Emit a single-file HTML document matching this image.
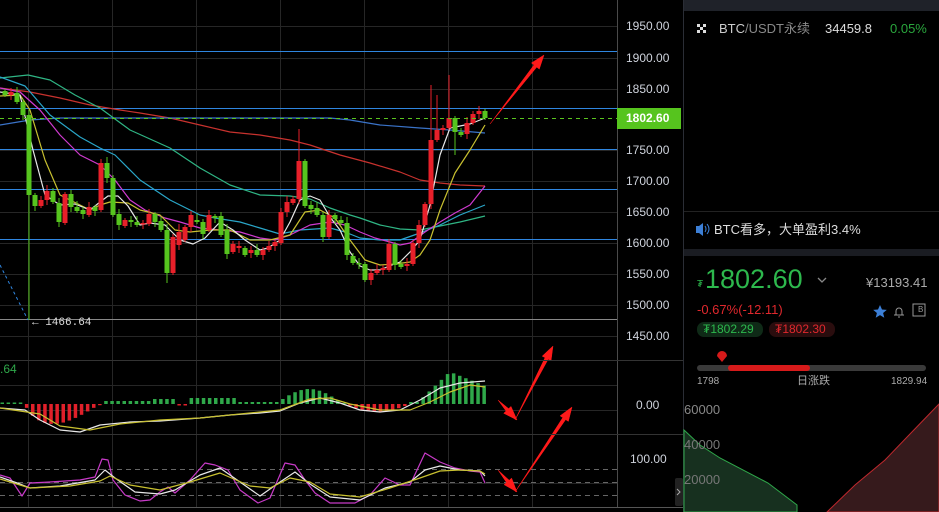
<!DOCTYPE html>
<html><head><meta charset="utf-8">
<style>
html,body{margin:0;padding:0;background:#000;width:939px;height:512px;overflow:hidden;font-family:"Liberation Sans","Noto Sans CJK SC",sans-serif}
#c{position:absolute;left:0;top:0}
.t{position:absolute;white-space:nowrap;line-height:1}
</style></head><body>
<svg id="c" width="939" height="512" xmlns="http://www.w3.org/2000/svg">
<g id="grid" stroke="#262626" stroke-width="1"></g>
<g id="hl" stroke="#2f86e0" stroke-width="1"></g>
<g id="ma" fill="none" stroke-width="1.2"></g>
<g id="cd"></g>
<g id="mac"></g>
<g id="ar" fill="#ff1a1a" stroke="#ff1a1a"></g>
<line x1="617.5" y1="0" x2="617.5" y2="507" stroke="#4a4a4a"/>
<line x1="0" y1="360.5" x2="683" y2="360.5" stroke="#333"/>
<line x1="0" y1="434.5" x2="683" y2="434.5" stroke="#333"/>
<line x1="0" y1="507.5" x2="683" y2="507.5" stroke="#555"/>
<line x1="0" y1="118.5" x2="617" y2="118.5" stroke="#5ac41e" stroke-dasharray="4,4"/>
<rect x="617" y="108" width="64" height="21" fill="#56c41e"/>
<path d="M0 265 L28 320" stroke="#2f86e0" stroke-dasharray="3,3"/>
<rect x="683" y="0" width="256" height="512" fill="#000"/>
<line x1="683.5" y1="0" x2="683.5" y2="512" stroke="#2a2d35"/>
<rect x="684" y="0" width="255" height="11" fill="#1f2229"/>
<line x1="684" y1="211.5" x2="939" y2="211.5" stroke="#222"/>
<rect x="684" y="249" width="255" height="7" fill="#1a1c22"/>
<g fill="#ddd"><rect x="697" y="24" width="3" height="3"/><rect x="703" y="24" width="3" height="3"/><rect x="700" y="27" width="3" height="3"/><rect x="697" y="30" width="3" height="3"/><rect x="703" y="30" width="3" height="3"/></g>
<path d="M696 226h3l4-3v13l-4-3h-3z" fill="#3c7fd6"/><path d="M705 226q2 3 0 6M707 224q4 5 0 10" stroke="#3c7fd6" fill="none"/>
<path d="M818 278l4 4 4-4" stroke="#888" fill="none" stroke-width="1.3"/>
<path d="M880 305l2 4.5 4.8.4-3.7 3.1 1.2 4.7-4.3-2.6-4.3 2.6 1.2-4.7-3.7-3.1 4.8-.4z" fill="#3c7fd6"/>
<path d="M894 315h10M896 315v-4a3 3 0 0 1 6 0v4M898 317h2" stroke="#999" fill="none"/>
<rect x="913" y="304" width="12" height="12" fill="none" stroke="#999"/>
<rect x="697" y="322" width="66" height="15" rx="7" fill="#0f2a17"/>
<rect x="769" y="322" width="66" height="15" rx="7" fill="#2a0d0e"/>
<path d="M722 362l-5-6a5 5 0 1 1 10 0z" fill="#d61a1a"/>
<rect x="697" y="365" width="229" height="6" rx="3" fill="#3a3a3a"/>
<rect x="728" y="365" width="82" height="6" rx="3" fill="#d61a1a"/>
<path d="M684 430L700 445 720 458 768 483 797 505V512H684z" fill="#17301f" stroke="#2fa84a"/>
<path d="M827 512L855 485 885 460 910 434 939 404V512z" fill="#361a1c" stroke="#c0282d"/>
<rect x="675" y="478" width="8" height="28" rx="2" fill="#222"/>
<path d="M677 489l3 3-3 3" stroke="#aaa" fill="none"/>
</svg>

<div class="t" style="left:626px;top:20px;color:#cfd3dc;font-size:12px">1950.00</div>
<div class="t" style="left:626px;top:52px;color:#cfd3dc;font-size:12px">1900.00</div>
<div class="t" style="left:626px;top:83px;color:#cfd3dc;font-size:12px">1850.00</div>
<div class="t" style="left:626px;top:112px;color:#fff;font-size:12px;font-weight:bold">1802.60</div>
<div class="t" style="left:626px;top:144px;color:#cfd3dc;font-size:12px">1750.00</div>
<div class="t" style="left:626px;top:175px;color:#cfd3dc;font-size:12px">1700.00</div>
<div class="t" style="left:626px;top:206px;color:#cfd3dc;font-size:12px">1650.00</div>
<div class="t" style="left:626px;top:237px;color:#cfd3dc;font-size:12px">1600.00</div>
<div class="t" style="left:626px;top:268px;color:#cfd3dc;font-size:12px">1550.00</div>
<div class="t" style="left:626px;top:299px;color:#cfd3dc;font-size:12px">1500.00</div>
<div class="t" style="left:626px;top:330px;color:#cfd3dc;font-size:12px">1450.00</div>
<div class="t" style="left:636px;top:399px;color:#cfd3dc;font-size:12px">0.00</div>
<div class="t" style="left:630px;top:453px;color:#cfd3dc;font-size:12px">100.00</div>
<div class="t" style="left:0px;top:363px;color:#2fa84a;font-size:12px">.64</div>
<div class="t" style="left:32px;top:318px;color:#ddd;font-size:11px;font-family:'Liberation Mono',monospace">← 1466.64</div>

<div class="t" style="left:719px;top:22px;font-size:13px;color:#ccc">BTC<span style="color:#888">/USDT永续</span></div>
<div class="t" style="left:825px;top:22px;font-size:13px;color:#ddd">34459.8</div>
<div class="t" style="left:890px;top:22px;font-size:13px;color:#2aa63d">0.05%</div>
<div class="t" style="left:714px;top:223px;font-size:13px;color:#ddd">BTC看多，大单盈利3.4%</div>
<div class="t" style="left:697px;top:280px;font-size:10px;color:#2db84d">₮</div>
<div class="t" style="left:705px;top:266px;font-size:27px;color:#2db84d">1802.60</div>
<div class="t" style="left:866px;top:276px;font-size:13px;color:#aaa">¥13193.41</div>
<div class="t" style="left:697px;top:303px;font-size:13px;color:#e0282d">-0.67%(-12.11)</div>
<div class="t" style="left:918px;top:306px;font-size:8px;color:#999">B</div>
<div class="t" style="left:703px;top:323px;font-size:12px;color:#2db84d">₮1802.29</div>
<div class="t" style="left:775px;top:323px;font-size:12px;color:#e0282d">₮1802.30</div>
<div class="t" style="left:697px;top:377px;font-size:10px;color:#aaa">1798</div>
<div class="t" style="left:797px;top:376px;font-size:11px;color:#aaa">日涨跌</div>
<div class="t" style="left:891px;top:377px;font-size:10px;color:#aaa">1829.94</div>
<div class="t" style="left:684px;top:403px;font-size:13px;color:#888">60000</div>
<div class="t" style="left:684px;top:438px;font-size:13px;color:#777">40000</div>
<div class="t" style="left:684px;top:473px;font-size:13px;color:#777">20000</div>

<script>
var NS="http://www.w3.org/2000/svg";
function el(p,t,a){var e=document.createElementNS(NS,t);for(var k in a)e.setAttribute(k,a[k]);document.getElementById(p).appendChild(e);return e;}
[28,112,196,280,364,448,532].forEach(function(x){el("grid","line",{x1:x+.5,y1:0,x2:x+.5,y2:507});});
[26,58,89,150,181,212,243,274,305,336,385,410,483].forEach(function(y){el("grid","line",{x1:0,y1:y+.5,x2:617,y2:y+.5});});
[51,108,149,189,239].forEach(function(y){el("hl","line",{x1:0,y1:y+.5,x2:617,y2:y+.5});});
el("grid","line",{x1:0,y1:319.5,x2:617,y2:319.5,stroke:"#888"});
[469,482,495].forEach(function(y){el("grid","line",{x1:0,y1:y+.5,x2:617,y2:y+.5,stroke:"#666","stroke-dasharray":"5,4"});});
var C=[[5,91,95],[11,95,92],[17,93,102],[23,102,115],[29,115,195],[35,195,206],[41,206,200],[47,200,191],[53,191,202],[59,203,222],[65,223,194],[71,194,207],[77,207,211],[83,210,214],[89,215,207],[95,207,211],[101,210,163],[107,163,178],[113,178,215],[119,214,225],[125,226,220],[131,220,222],[137,222,225],[143,224,223],[149,224,214],[155,214,222],[161,221,230],[167,230,273],[173,273,237],[179,245,232],[185,240,227],[191,227,215],[197,220,222],[203,222,234],[209,230,215],[215,216,218],[221,216,235],[227,230,254],[233,252,244],[239,248,246],[245,248,255],[251,253,250],[257,250,255],[263,255,250],[269,250,246],[275,246,242],[281,243,212],[287,212,202],[293,203,199],[299,199,161],[305,161,206],[311,205,209],[317,208,215],[323,215,237],[329,237,215],[335,215,219],[341,220,223],[347,223,255],[353,256,263],[359,263,264],[365,264,280],[371,280,273],[377,273,270],[383,270,268],[389,270,244],[395,244,265],[401,264,267],[407,266,264],[413,264,243],[419,243,225],[425,225,204],[431,204,140],[437,140,130],[443,130,128],[449,128,118],[455,118,132],[461,132,135],[467,134,123],[473,123,114],[479,114,111],[485,111,118]];
C.forEach(function(c,i){var x=c[0],o=c[1],cl=c[2];var dn=cl>=o;var col=dn?"#56c41e":"#e8202a";var top=Math.min(o,cl),bot=Math.max(o,cl);var w=((i*7)%5)+2;var hi=top-w,lo=bot+((i*3)%6)+2;
if(x==29)lo=320;if(x==299)hi=129;if(x==431)hi=85;if(x==449)hi=75;if(x==437)hi=95;if(x==455)lo=155;if(x==167)lo=283;if(x==179)hi=224;
el("cd","line",{x1:x,y1:hi,x2:x,y2:lo,stroke:col});el("cd","rect",{x:x-2.5,y:top,width:5,height:Math.max(bot-top,1.5),fill:col});});
function pl(p,pts,col,w){el(p,"polyline",{points:pts,stroke:col,fill:"none","stroke-width":w||1.2,"stroke-linejoin":"round"});}
pl("ma","0,88 30,92 60,98 90,105 120,110 140,113 170,118 200,125 230,132 260,135 290,140 310,145 340,155 370,163 400,172 420,180 440,183 460,185 485,186","#c8322e");
pl("ma","0,125 30,120 60,118 100,118 200,118 250,118 300,118 330,118 350,120 380,125 420,128 450,130 485,133","#3a73c8");
pl("ma","0,78 28,75 50,80 75,95 100,108 130,130 170,148 200,168 230,185 260,195 290,196 310,199 330,208 350,215 360,218 380,225 400,229 420,230 440,226 460,222 485,216","#2fb584");
pl("ma","0,77 25,86 50,115 80,137 100,148 115,155 140,180 170,200 200,215 215,218 240,222 260,228 280,234 300,230 330,228 345,232 360,238 380,240 400,240 420,233 440,225 460,215 485,205","#2aa6c8");
pl("ma","0,88 20,92 40,110 60,135 80,155 100,165 115,180 130,200 145,210 165,218 180,222 200,228 220,230 240,232 260,238 275,240 290,235 310,225 330,222 345,225 360,232 375,238 390,242 400,245 410,243 425,232 440,222 455,213 470,205 485,186","#d03ad0");
pl("ma","0,96 20,95 30,110 45,160 60,195 80,205 90,210 100,205 110,202 128,203 140,210 160,215 175,230 190,232 210,230 230,230 250,240 270,240 290,235 305,212 320,210 335,218 350,240 365,260 380,265 395,264 410,262 420,255 430,240 440,210 455,173 470,150 485,125","#c8c030");
pl("ma","0,92 20,95 33,150 45,195 60,205 75,204 90,210 100,202 108,196 118,196 128,206 140,225 150,223 165,225 180,240 193,244 205,238 220,222 233,230 245,240 260,250 268,248 280,240 290,222 300,200 310,196 320,200 330,217 340,230 350,252 360,266 370,270 380,270 392,265 400,262 410,252 420,240 430,205 440,155 450,128 460,126 470,124 485,118","#e8e8e8");
function h(x){if(x<25)return 1.5;if(x<100){var t=(x-25)/75;return -20*Math.sin(Math.PI*Math.pow(t,0.7));}
if(x<150)return 3;if(x<178)return 4+((x|0)%3);if(x<190)return -1.5;if(x<235)return 6;if(x<278)return 2;
if(x<340)return 13*Math.sin(Math.PI*(x-278)/62)+2;if(x<345)return 1;if(x<410)return -8*Math.sin(Math.PI*(x-345)/65);if(x<420)return 2;
if(x<450)return 4+(x-420)*0.95;return 32-(x-450)*0.4;}
for(var x=2;x<490;x+=6.1){var v=h(x);var col=v>=0?"#2fa84a":"#e0202a";el("mac","rect",{x:x-1.5,y:v>=0?404-v:404,width:3.5,height:Math.max(Math.abs(v),1.2),fill:col});}
pl("mac","0,408 25,410 40,420 60,430 80,432 100,425 130,422 160,421 200,418 230,415 260,413 280,411 300,403 320,398 340,403 360,410 380,412 400,410 420,400 440,388 460,383 485,381","#e8e8e8");
pl("mac","0,408 40,414 60,426 90,430 120,424 160,420 200,418 240,414 280,410 310,399 330,398 350,404 380,410 410,410 430,402 450,392 470,385 485,387","#c8c030");
pl("mac","0,475 10,478 22,496 30,483 50,482 80,480 95,477 102,459 108,460 113,480 125,495 140,501 150,500 160,492 168,487 175,493 190,480 205,463 215,465 228,470 240,490 258,503 270,498 285,463 295,465 305,480 315,493 330,503 355,503 370,495 385,478 400,485 410,485 425,453 440,462 455,468 470,471 480,472 485,483","#c83ac8");
pl("mac","0,477 20,484 30,488 60,486 95,480 105,470 115,478 135,492 160,494 175,490 200,475 220,468 240,482 260,496 280,482 295,472 310,484 330,497 360,500 385,488 410,482 425,470 440,466 460,470 480,471 485,476","#e8e8e8");
pl("mac","0,479 30,488 70,486 100,481 110,476 130,485 160,490 190,482 220,473 250,486 270,488 290,478 310,482 330,494 360,497 390,488 420,478 440,471 460,470 480,471 485,474","#c8c030");
function arrow(x1,y1,x2,y2){var a=Math.atan2(y2-y1,x2-x1),L=14,W=5;var bx=x2-L*Math.cos(a),by=y2-L*Math.sin(a);var px=-Math.sin(a)*W,py=Math.cos(a)*W;
el("ar","polygon",{points:x1+","+y1+" "+(bx+px*0.35)+","+(by+py*0.35)+" "+(bx+px)+","+(by+py)+" "+x2+","+y2+" "+(bx-px)+","+(by-py)+" "+(bx-px*0.35)+","+(by-py*0.35),"stroke-width":0.5});}
arrow(490,124,544,55);
arrow(498,400,517,420);arrow(515,420,553,346);
arrow(498,470,517,492);arrow(515,492,572,407);
</script>
</body></html>
